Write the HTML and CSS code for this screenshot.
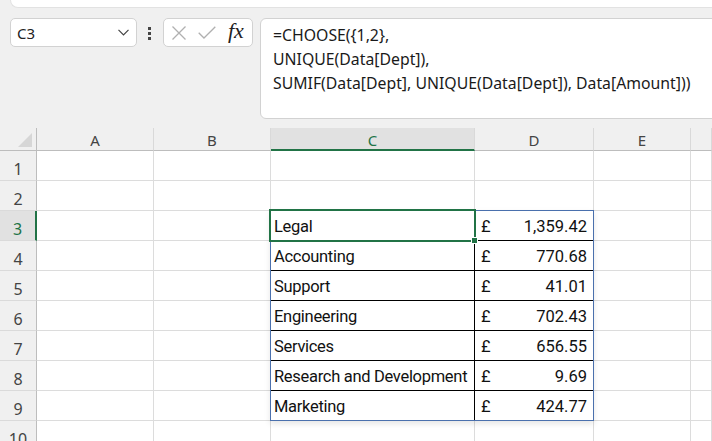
FILE: index.html
```html
<!DOCTYPE html>
<html>
<head>
<meta charset="utf-8">
<link rel="stylesheet" href="styles.css">
</head>
<body>
<div class="app">
  <div class="ribbon-edge"></div>
  <div class="formula-row">
    <div class="namebox">
      <span class="name">C3</span>
      <svg class="chev" width="11" height="7" viewBox="0 0 11 7"><path d="M0.5 0.8L5.5 5.8L10.5 0.8" fill="none" stroke="#444" stroke-width="1.2"/></svg>
    </div>
    <div class="dots"><i></i><i></i><i></i></div>
    <div class="fxbox">
      <svg class="ico-x" width="14" height="14" viewBox="0 0 14 14"><path d="M0.5 0.5L13.5 13.5M13.5 0.5L0.5 13.5" stroke="#b0b0b0" stroke-width="1.3" fill="none"/></svg>
      <svg class="ico-check" width="18" height="13" viewBox="0 0 18 13"><path d="M0.7 6.8L6 12L17.3 0.7" stroke="#b0b0b0" stroke-width="1.3" fill="none"/></svg>
      <span class="fx">fx</span>
    </div>
    <div class="formula">
      <div>=CHOOSE({1,2},</div>
      <div>UNIQUE(Data[Dept]),</div>
      <div>SUMIF(Data[Dept], UNIQUE(Data[Dept]), Data[Amount]))</div>
    </div>
  </div>

  <div class="sheet">
    <div class="ch corner"><svg width="16" height="16" viewBox="0 0 16 16"><path d="M15 1V15H1Z" fill="#d6d6d6"/></svg></div>
    <div class="ch">A</div><div class="ch">B</div><div class="ch sel">C</div><div class="ch">D</div><div class="ch">E</div><div class="ch"></div>

    <div class="table">
      <div class="tc name">Legal</div><div class="tc amt"><span>£</span><span>1,359.42</span></div>
      <div class="tc name">Accounting</div><div class="tc amt"><span>£</span><span>770.68</span></div>
      <div class="tc name">Support</div><div class="tc amt"><span>£</span><span>41.01</span></div>
      <div class="tc name">Engineering</div><div class="tc amt"><span>£</span><span>702.43</span></div>
      <div class="tc name">Services</div><div class="tc amt"><span>£</span><span>656.55</span></div>
      <div class="tc name">Research and Development</div><div class="tc amt"><span>£</span><span>9.69</span></div>
      <div class="tc name last">Marketing</div><div class="tc amt last"><span>£</span><span>424.77</span></div>
    </div>
    <div class="selection"><i class="handle"></i></div>

    <div class="rh">1</div><div class="c"></div><div class="c"></div><div class="c"></div><div class="c"></div><div class="c"></div><div class="c"></div>
    <div class="rh">2</div><div class="c"></div><div class="c"></div><div class="c"></div><div class="c"></div><div class="c"></div><div class="c"></div>
    <div class="rh sel">3</div><div class="c"></div><div class="c"></div><div class="c"></div><div class="c"></div>
    <div class="rh">4</div><div class="c"></div><div class="c"></div><div class="c"></div><div class="c"></div>
    <div class="rh">5</div><div class="c"></div><div class="c"></div><div class="c"></div><div class="c"></div>
    <div class="rh">6</div><div class="c"></div><div class="c"></div><div class="c"></div><div class="c"></div>
    <div class="rh">7</div><div class="c"></div><div class="c"></div><div class="c"></div><div class="c"></div>
    <div class="rh">8</div><div class="c"></div><div class="c"></div><div class="c"></div><div class="c"></div>
    <div class="rh">9</div><div class="c"></div><div class="c"></div><div class="c"></div><div class="c"></div>
    <div class="rh">10</div><div class="c"></div><div class="c"></div><div class="c"></div><div class="c"></div><div class="c"></div><div class="c"></div>
  </div>
</div>
</body>
</html>
```

FILE: styles.css
```css
* { box-sizing: border-box; }
html, body { margin: 0; padding: 0; }
body {
  width: 712px;
  height: 441px;
  overflow: hidden;
  background: #f0f0f0;
  font-family: "Noto Sans", "Open Sans", sans-serif;
  color: #222;
}
.app { width: 712px; height: 441px; overflow: hidden; }

.ribbon-edge {
  height: 8px;
  margin-left: 10px;
  background: #fff;
  border-left: 1px solid #e2e2e2;
  border-bottom: 1px solid #e2e2e2;
  border-bottom-left-radius: 8px;
}

.formula-row {
  display: flex;
  align-items: flex-start;
  margin-top: 10px;
  padding-left: 10px;
  width: 1000px;
}
.namebox {
  width: 127px;
  height: 29px;
  background: #fff;
  border: 1px solid #d2d2d2;
  border-radius: 5px;
  display: flex;
  align-items: center;
  padding: 0 7px 0 6px;
}
.namebox .name { font-size: 15px; color: #222; }
.namebox .chev { margin-left: auto; }

.dots {
  margin-left: 11px;
  margin-top: 9px;
  display: flex;
  flex-direction: column;
  gap: 2px;
}
.dots i { display: block; width: 3px; height: 3px; background: #444; }

.fxbox {
  margin-left: 12px;
  width: 90px;
  height: 29px;
  background: #fff;
  border: 1px solid #d2d2d2;
  border-radius: 5px;
  display: flex;
  align-items: center;
  padding-left: 8px;
}
.ico-check { margin-left: 12px; }
.fx {
  margin-left: 12px;
  font-family: "Liberation Serif", "DejaVu Serif", serif;
  font-style: italic;
  font-size: 22px;
  color: #222;
  line-height: 1;
  margin-top: -3px;
}

.formula {
  margin-left: 7px;
  width: 480px;
  height: 101px;
  background: #fff;
  border: 1px solid #d2d2d2;
  border-radius: 6px;
  padding: 4px 0 0 12px;
  font-size: 15.8px;
  line-height: 24px;
  color: #1a1a1a;
}

.sheet {
  margin-top: 9px;
  display: grid;
  grid-template-columns: 37px 117px 117px 204px 119px 97px 21px;
  grid-template-rows: 23px repeat(10, 30px);
  background: #fff;
}

.ch {
  background: #f0f0f0;
  border-right: 1px solid #d9d9d9;
  border-bottom: 1px solid #bdbdbd;
  display: flex;
  align-items: center;
  justify-content: center;
  font-size: 15px;
  color: #444;
  padding-top: 2px;
}
.ch.corner {
  border-right-color: #bdbdbd;
  justify-content: flex-end;
  align-items: flex-end;
  padding: 0 3px 2px 0;
}
.ch.sel {
  background: #e1e1e1;
  color: #217346;
  border-bottom: 2px solid #217346;
  padding-top: 3px;
}

.rh {
  background: #f0f0f0;
  border-right: 1px solid #bdbdbd;
  border-bottom: 1px solid #dadada;
  display: flex;
  justify-content: center;
  align-items: flex-end;
  padding-bottom: 3px;
  font-size: 16px;
  color: #444;
  line-height: 1;
}
.rh.sel {
  background: #e1e1e1;
  color: #217346;
  border-right: 2px solid #217346;
}

.c {
  border-right: 1px solid #dcdcdc;
  border-bottom: 1px solid #dcdcdc;
  background: #fff;
}

.table {
  grid-column: 4 / 6;
  grid-row: 4 / 11;
  margin: -1px 0 0 -1px;
  border: 1px solid #4a70ad;
  display: grid;
  grid-template-columns: 204px 118px;
  grid-template-rows: repeat(6, 30px) 29px;
  background: #fff;
  box-shadow: 0 3px 6px rgba(0, 0, 0, 0.10);
  font-family: Roboto, "Noto Sans", sans-serif;
  font-size: 16.5px;
  letter-spacing: -0.3px;
  color: #111;
  position: relative;
  z-index: 1;
}
.tc {
  border-bottom: 1px solid #000;
  display: flex;
  align-items: center;
  padding-top: 2px;
  white-space: nowrap;
}
.tc.last { border-bottom: none; padding-top: 1px; }
.tc.name {
  border-right: 1px solid #000;
  padding-left: 3px;
}
.tc.amt {
  justify-content: space-between;
  padding: 2px 6px 0 6px;
  letter-spacing: 0;
}
.tc.amt.last { padding-top: 1px; }

.selection {
  grid-column: 4 / 5;
  grid-row: 4 / 5;
  margin: -2px -1px -1px -2px;
  border: 2px solid #217346;
  position: relative;
  z-index: 2;
  pointer-events: none;
}
.selection .handle {
  position: absolute;
  right: -4px;
  bottom: -4px;
  width: 7px;
  height: 7px;
  background: #217346;
  border: 1px solid #fff;
}
```
